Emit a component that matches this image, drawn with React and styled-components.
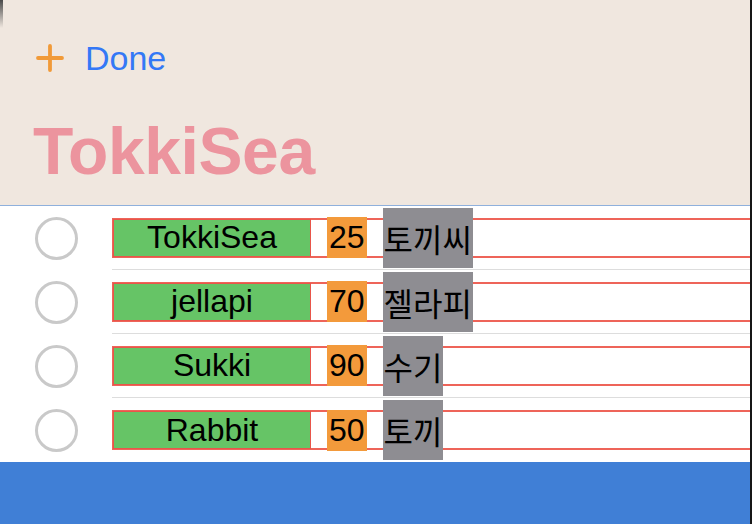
import React from "react";
import styled, { createGlobalStyle } from "styled-components";

const GlobalStyle = createGlobalStyle`
  html, body { margin: 0; padding: 0; background: #ffffff; }
  body { font-family: "Liberation Sans", Arial, sans-serif; overflow: hidden; }
  #root { width: 752px; height: 524px; }
`;

const Screen = styled.div`
  position: relative;
  width: 752px;
  height: 524px;
  box-sizing: border-box;
  display: flex;
  flex-direction: column;
  background: #ffffff;
  border-right: 2px solid #161616;
  overflow: hidden;
`;

const CornerShade = styled.div`
  position: absolute;
  left: 0;
  top: 0;
  width: 3px;
  height: 28px;
  background: linear-gradient(#4a4a4a, rgba(74, 74, 74, 0));
`;

const Header = styled.header`
  height: 206px;
  box-sizing: border-box;
  background: #f0e7df;
  border-bottom: 1px solid #8fb0dc;
  padding: 44px 0 0 33px;
  display: flex;
  flex-direction: column;
`;

const Toolbar = styled.div`
  display: flex;
  align-items: center;
  gap: 21px;
  height: 28px;
  padding-left: 3px;
`;

const PlusButton = styled.button`
  width: 28px;
  height: 28px;
  padding: 0;
  border: 0;
  background: none;
  display: flex;
  align-items: center;
  justify-content: center;
`;

const DoneButton = styled.button`
  border: 0;
  background: none;
  padding: 0;
  font-family: "Liberation Sans", Arial, sans-serif;
  font-size: 34px;
  line-height: 28px;
  color: #3478f6;
`;

const Title = styled.h1`
  margin: 46px 0 0 0;
  font-family: "Liberation Sans", Arial, sans-serif;
  font-weight: 700;
  font-size: 66px;
  line-height: 66px;
  letter-spacing: -0.4px;
  color: #ec949e;
`;

const List = styled.div`
  display: flex;
  flex-direction: column;
`;

const Row = styled.div`
  display: grid;
  grid-template-columns: 112px 1fr;
  height: 64px;
`;

const CheckCell = styled.div`
  display: flex;
  align-items: center;
  justify-content: center;
`;

const Check = styled.div`
  width: 43px;
  height: 43px;
  box-sizing: border-box;
  border-radius: 50%;
  border: 3px solid #c9c9c9;
`;

const Content = styled.div`
  display: flex;
  align-items: center;
  border-bottom: ${(p) => (p.$last ? "0" : "1px solid #dddddd")};
  box-sizing: border-box;
`;

const Frame = styled.div`
  flex: 1;
  margin-right: -12px;
  height: 40px;
  box-sizing: border-box;
  border: 2px solid #ee6459;
  display: flex;
  align-items: center;
  gap: 16px;
`;

const Name = styled.span`
  width: 198px;
  height: 38px;
  box-sizing: border-box;
  border: 1px solid #e8554a;
  margin-left: -1px;
  background: #66c466;
  display: flex;
  align-items: center;
  justify-content: center;
  font-size: 32px;
  color: #000000;
`;

const Age = styled.span`
  height: 41px;
  padding: 0 2px;
  background: #f39a3b;
  display: flex;
  align-items: center;
  font-size: 32px;
  color: #000000;
`;

const Korean = styled.span`
  padding: 10px 1px;
  line-height: 40px;
  background: #8e8d92;
  font-family: "Noto Sans CJK KR", sans-serif;
  font-size: 32px;
  color: #000000;
`;

const Footer = styled.footer`
  flex: 1;
  background: #407fd6;
`;

const people = [
  { name: "TokkiSea", age: 25, kr: "토끼씨" },
  { name: "jellapi", age: 70, kr: "젤라피" },
  { name: "Sukki", age: 90, kr: "수기" },
  { name: "Rabbit", age: 50, kr: "토끼" },
];

export default function App() {
  return (
    <>
      <GlobalStyle />
      <Screen>
        <CornerShade />
        <Header>
          <Toolbar>
            <PlusButton aria-label="Add">
              <svg width="28" height="28" viewBox="0 0 28 28">
                <path
                  d="M14 2v24M2 14h24"
                  stroke="#f19a38"
                  strokeWidth="3.8"
                  strokeLinecap="round"
                  fill="none"
                />
              </svg>
            </PlusButton>
            <DoneButton>Done</DoneButton>
          </Toolbar>
          <Title>TokkiSea</Title>
        </Header>
        <List>
          {people.map((p, i) => (
            <Row key={p.name}>
              <CheckCell>
                <Check />
              </CheckCell>
              <Content $last={i === people.length - 1}>
                <Frame>
                  <Name>{p.name}</Name>
                  <Age>{p.age}</Age>
                  <Korean>{p.kr}</Korean>
                </Frame>
              </Content>
            </Row>
          ))}
        </List>
        <Footer />
      </Screen>
    </>
  );
}
